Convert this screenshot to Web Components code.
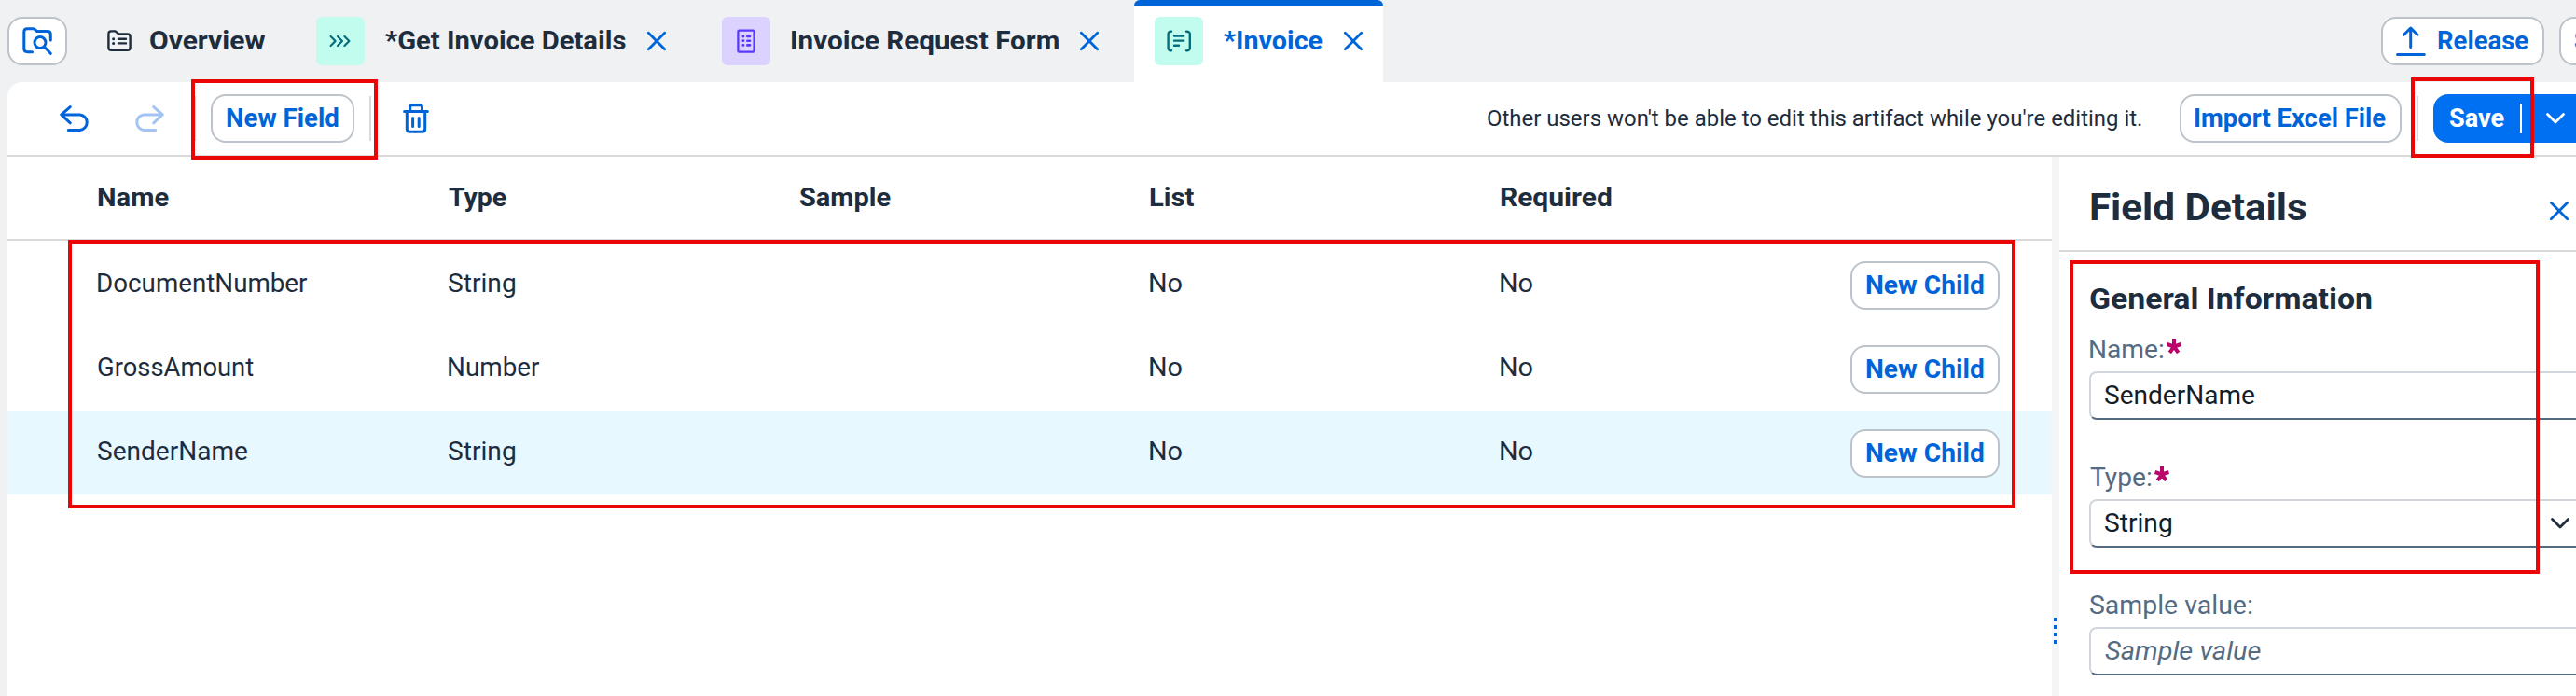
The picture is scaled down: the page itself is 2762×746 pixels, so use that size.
<!DOCTYPE html>
<html lang="en">
<head>
<meta charset="utf-8">
<title>Invoice</title>
<style>
html,body{margin:0;height:100%;overflow:hidden}
body{font-family:Roboto,"Liberation Sans",sans-serif;background:#eff1f2;color:#1d2d3e}
</style>
</head>
<body>
<invoice-editor></invoice-editor>
<script>
const define = (name, html, connect) => {
  const tpl = document.createElement('template');
  tpl.innerHTML = html;
  customElements.define(name, class extends HTMLElement {
    constructor() {
      super();
      this.attachShadow({ mode: 'open' }).append(tpl.content.cloneNode(true));
    }
    connectedCallback() { if (connect) connect(this, this.shadowRoot); }
  });
};

/* Label whose glyphs span exactly `w` pixels, stretched horizontally. */
const pen = document.createElement('canvas').getContext('2d');
define('fit-text', `<style>
  :host{display:block;flex:none;white-space:nowrap;line-height:36px}
  span{display:block;width:max-content;transform-origin:0 0}
</style><span><slot></slot></span>`, (el, root) => {
  const text = el.textContent;
  const size = el.getAttribute('size') || 28;
  const weight = el.getAttribute('weight') || 400;
  const slant = el.hasAttribute('italic') ? 'italic' : 'normal';
  const w = +el.getAttribute('w');
  pen.font = `${slant} ${weight} ${size}px Roboto, "Liberation Sans", sans-serif`;
  const m = pen.measureText(text);
  const ink = m.actualBoundingBoxRight + m.actualBoundingBoxLeft;
  const k = w / ink;
  const s = root.querySelector('span').style;
  s.font = pen.font;
  s.lineHeight = 'inherit';
  s.transform = `translateX(${m.actualBoundingBoxLeft * k}px) scaleX(${k})`;
  el.style.width = w + 'px';
});

const ICONS = {
  search: [32, 30, 3, '<path d="M10.5 26.7H5.5Q1.8 26.7 1.8 23V5Q1.8 1.7 5 1.7H11.5Q12.8 1.7 13.8 2.8L15.7 4.6H27Q30.3 4.6 30.3 8V14"/><circle cx="19" cy="16.6" r="6"/><path d="M23.6 21.2L30.3 28.3"/>'],
  overview: [26, 24, 2.4, '<path d="M1.4 4.4Q1.4 1.4 4.4 1.4H8.6L12.2 4.4H21.6Q24.6 4.4 24.6 7.4V18.8Q24.6 21.8 21.6 21.8H4.4Q1.4 21.8 1.4 18.8Z"/><path d="M6.6 9.7H6.7M6.6 14.4H6.7" stroke-width="3"/><path d="M12 9.7H20M12 14.4H20"/>'],
  process: [52, 52, 2.2, '<path d="M15.6 21L20.6 26L15.6 31M23 21L28 26L23 31M30.4 21L35.4 26L30.4 31"/>'],
  form: [52, 52, 2.3, '<rect x="17.4" y="14.6" width="17.2" height="23" rx="1.2"/><path d="M22.8 21H23M22.8 25.7H23M22.8 30.4H23" stroke-width="2.8"/><path d="M27.3 21H30M27.3 25.7H30M27.3 30.4H30" stroke-width="2.6"/>'],
  data: [52, 52, 2.4, '<path d="M18 15.8Q14.6 15.6 14.6 18.6V33.4Q14.6 36.4 18 36.2M34 15.8Q37.8 15.6 37.8 18.6V33.4Q37.8 36.4 34 36.2M21 20.5H31.2M21 25.6H31.2M21 30.7H26"/>'],
  undo: [32, 30, 3, '<path d="M11.3 2.6L1.7 10.9L11.3 19.8M2.2 10.9H21.8A8.3 8.3 0 0 1 21.8 27.4H9.3"/>'],
  redo: [32, 30, 3, '<path d="M20.7 2.6L30.3 10.9L20.7 19.8M29.8 10.9H10.2A8.3 8.3 0 0 0 10.2 27.4H22.7"/>'],
  trash: [28, 32, 3, '<path d="M1.6 8.4H26.4M7.7 8.2V4Q7.7 1.8 9.9 1.8H18.3Q20.5 1.8 20.5 4V8.2M4.3 8.6V27.3Q4.3 30.3 7.3 30.3H20.7Q23.7 30.3 23.7 27.3V8.6M10.6 15.5V24.5M17.2 15.5V24.5"/>'],
  release: [32, 32, 3, '<path d="M15.7 22.5V2.4M8.4 9.2L15.7 2L23 9.2M1.5 30.4H30.3"/>'],
  close: [20, 20, 2.8, '<path d="M1.3 1.3L18.7 18.7M18.7 1.3L1.3 18.7"/>'],
  down: [20, 12, 2.8, '<path d="M1.5 1.5L10 10L18.5 1.5"/>']
};
define('ui-icon', `<style>:host{display:block;flex:none}svg{display:block;overflow:visible}</style><div></div>`, (el, root) => {
  const [w, h, sw, body] = ICONS[el.getAttribute('name')];
  root.querySelector('div').innerHTML = `<svg width="${w}" height="${h}" viewBox="0 0 ${w} ${h}" fill="none" stroke="currentColor" stroke-width="${sw}" stroke-linecap="round" stroke-linejoin="round">${body}</svg>`;
});

define('ui-button', `<style>
  :host{display:flex;flex:none;align-items:center;box-sizing:border-box;height:52px;padding:0 15px;border:2px solid #bcc3ca;border-radius:16px;background:#fff;color:#0064d9}
</style><slot></slot>`);

define('ui-separator', `<style>:host{display:block;flex:none;width:2px;height:48px;background:#d9d9d9}</style>`);

define('tab-badge', `<style>
  :host{display:block;flex:none;width:52px;height:52px;border-radius:6px;background:#c2fcee;color:#046c7a}
  :host([tone=violet]){background:#dcd2ff;color:#5d36ff}
</style><slot></slot>`);

define('editor-tab', `<style>
  :host{display:flex;flex:none;align-items:center;height:88px;box-sizing:border-box;position:relative}
  :host([active]){background:#fff;color:#0064d9;border-radius:6px 6px 0 0;overflow:hidden}
  :host([active])::before{content:"";position:absolute;inset:0 0 auto;height:6px;background:#0064d9}
  .label{margin-left:22px;display:flex}
  .x{margin-left:23px;color:#0064d9}
</style><slot name="icon"></slot><div class="label"><slot></slot></div><ui-icon class="x" name="close"></ui-icon>`);

define('tab-bar', `<style>
  :host{display:flex;align-items:center;height:88px}
  .find{padding:0 14px;margin-left:8px}
</style>
<ui-button class="find"><ui-icon name="search"></ui-icon></ui-button>
<ui-icon name="overview" style="margin-left:43px"></ui-icon>
<fit-text w="124" weight="700" style="margin-left:20px">Overview</fit-text>
<editor-tab style="margin-left:54px"><tab-badge slot="icon"><ui-icon name="process"></ui-icon></tab-badge><fit-text w="258" weight="700">*Get Invoice Details</fit-text></editor-tab>
<editor-tab style="margin-left:60px"><tab-badge slot="icon" tone="violet"><ui-icon name="form"></ui-icon></tab-badge><fit-text w="286" weight="700" style="margin-left:1px">Invoice Request Form</fit-text></editor-tab>
<editor-tab active style="margin-left:38px;padding:0 22px"><tab-badge slot="icon"><ui-icon name="data"></ui-icon></tab-badge><fit-text w="106" weight="700">*Invoice</fit-text></editor-tab>
<ui-button style="margin-left:auto;padding:0 15px 0 14px"><ui-icon name="release"></ui-icon><fit-text w="97" weight="700" style="margin-left:13px">Release</fit-text></ui-button>
<ui-button style="margin:0 -82px 0 16px;width:100px;padding-left:14px"><fit-text w="14" weight="700">S</fit-text></ui-button>`);

define('tool-bar', `<style>
  :host{display:flex;align-items:center;height:80px;padding-bottom:0;box-sizing:border-box;border-bottom:2px solid #d9d9d9;color:#0064d9}
  .msg{margin-left:auto;color:#1d2d3e}
  .save{display:flex;align-items:center;height:52px;width:170px;margin:0 -17px 0 16px;box-sizing:border-box;padding-left:17px;background:#0070f2;color:#fff;border-radius:16px 0 0 16px}
  .save i{width:2px;height:32px;background:#fff;margin:0 26px 0 17px}
</style>
<ui-icon name="undo" style="margin-left:56px"></ui-icon>
<ui-icon name="redo" style="margin-left:48px;color:#a3c3f3"></ui-icon>
<ui-separator style="margin-left:32px"></ui-separator>
<ui-button style="margin-left:16px"><fit-text w="120" weight="700">New Field</fit-text></ui-button>
<ui-separator style="margin-left:16px"></ui-separator>
<ui-icon name="trash" style="margin-left:34px"></ui-icon>
<fit-text class="msg" w="701" size="24.5">Other users won't be able to edit this artifact while you're editing it.</fit-text>
<ui-button style="margin-left:41px"><fit-text w="204" weight="700">Import Excel File</fit-text></ui-button>
<ui-separator style="margin-left:16px"></ui-separator>
<div class="save"><fit-text w="59" weight="700">Save</fit-text><i></i><ui-icon name="down"></ui-icon></div>`);

define('table-row', `<style>
  :host{display:grid;grid-template-columns:376px 376px 376px 376px 376px 1fr;align-items:center;height:90px;padding-left:96px;box-sizing:border-box}
  :host([selected]){background:#e8f8ff}
  :host([head]){height:90px;border-bottom:2px solid #d9d9d9;margin-bottom:2px}
  div{height:38px;padding-left:1px}
  :host([head]) div{height:36px;padding-left:.5px}
  ui-button{width:160px;margin:2px 0 0 0}
</style>`, (el, root) => {
  const head = el.hasAttribute('head');
  for (const cell of el.getAttribute('cells').split(',')) {
    const [text, w] = cell.split(':');
    const box = document.createElement('div');
    if (text) box.innerHTML = `<fit-text w="${w}" weight="${head ? 700 : 400}">${text}</fit-text>`;
    root.append(box);
  }
  if (!head) {
    const b = document.createElement('ui-button');
    b.innerHTML = '<fit-text w="126" weight="700">New Child</fit-text>';
    root.append(b);
  }
});

define('form-field', `<style>
  :host{display:block;height:137px}
  .label{display:flex;height:29px;padding-top:7px;color:#556b82;padding-left:1px}
  svg{margin:6px 0 0 4px}
  .box{display:flex;align-items:center;height:52px;box-sizing:border-box;width:560px;margin-top:12px;border:2px solid #d1d6dc;border-bottom-color:#556b82;border-radius:8px;padding-left:15px;background:#fff;color:#131e29}
  .arrow{margin-left:auto;margin-right:43px;color:#1d2d3e}
</style>
<div class="label"><slot name="label"></slot><svg width="16" height="16" viewBox="0 0 16 16" stroke="#ba066c" stroke-width="4"><path d="M8 8.5V0M8 8.5L.6 6M8 8.5L3.4 15M8 8.5L12.6 15M8 8.5L15.4 6"/></svg></div>
<div class="box"><slot></slot><ui-icon class="arrow" name="down"></ui-icon></div>`, (el, root) => {
  if (!el.hasAttribute('required')) root.querySelector('svg').remove();
  if (!el.hasAttribute('select')) root.querySelector('ui-icon').remove();
});

define('details-panel', `<style>
  :host{display:block;background:#fff;overflow:hidden}
  header{display:flex;align-items:center;height:102px;box-sizing:border-box;border-bottom:2px solid #d9d9d9;padding:0 8px 0 34px}
  header ui-icon{margin:15px 0 0 auto;color:#0064d9}
  header fit-text{line-height:50px;margin-top:9px}
  section{padding:32px 0 0 32px}
  .title{margin:0 0 17px 1px;line-height:36px}
</style>
<header><fit-text w="231" size="40" weight="700">Field Details</fit-text><ui-icon name="close"></ui-icon></header>
<section>
<fit-text class="title" w="302" size="32" weight="700">General Information</fit-text>
<form-field required style="margin-top:-5px"><fit-text slot="label" w="78">Name:</fit-text><fit-text w="160">SenderName</fit-text></form-field>
<form-field required select><fit-text slot="label" w="65">Type:</fit-text><fit-text w="71">String</fit-text></form-field>
<form-field><fit-text slot="label" w="173">Sample value:</fit-text><fit-text w="167" italic style="color:#556b82">Sample value</fit-text></form-field>
</section>`);

define('panel-splitter', `<style>
  :host{display:flex;flex-direction:column;gap:4px;align-items:center;background:#f4f5f6;padding-top:494px;box-sizing:border-box}
  i{flex:none;width:4px;height:4px;background:#0064d9}
</style><i></i><i></i><i></i><i></i>`);

define('highlight-frame', `<style>:host{position:absolute;box-sizing:border-box;border:4px solid #ea0606}</style>`);

define('invoice-editor', `<style>
  :host{display:block;position:relative;width:2762px;height:746px;overflow:hidden;background:#eff1f2}
  main{margin-left:8px;height:658px;background:#fff;border-top-left-radius:16px}
  .body{display:grid;grid-template-columns:2192px 8px 1fr;height:578px}
</style>
<tab-bar></tab-bar>
<main>
  <tool-bar></tool-bar>
  <div class="body">
    <div>
      <table-row head cells="Name:76,Type:62,Sample:98,List:47,Required:119"></table-row>
      <table-row cells="DocumentNumber:225,String:71,,No:34,No:34"></table-row>
      <table-row cells="GrossAmount:167,Number:98,,No:34,No:34"></table-row>
      <table-row selected cells="SenderName:160,String:71,,No:34,No:34"></table-row>
    </div>
    <panel-splitter></panel-splitter>
    <details-panel></details-panel>
  </div>
</main>
<highlight-frame style="left:205px;top:85px;width:200px;height:86px"></highlight-frame>
<highlight-frame style="left:2585px;top:83px;width:132px;height:86px"></highlight-frame>
<highlight-frame style="left:73px;top:257px;width:2088px;height:288px"></highlight-frame>
<highlight-frame style="left:2219px;top:279px;width:504px;height:336px"></highlight-frame>`);
</script>
</body>
</html>
